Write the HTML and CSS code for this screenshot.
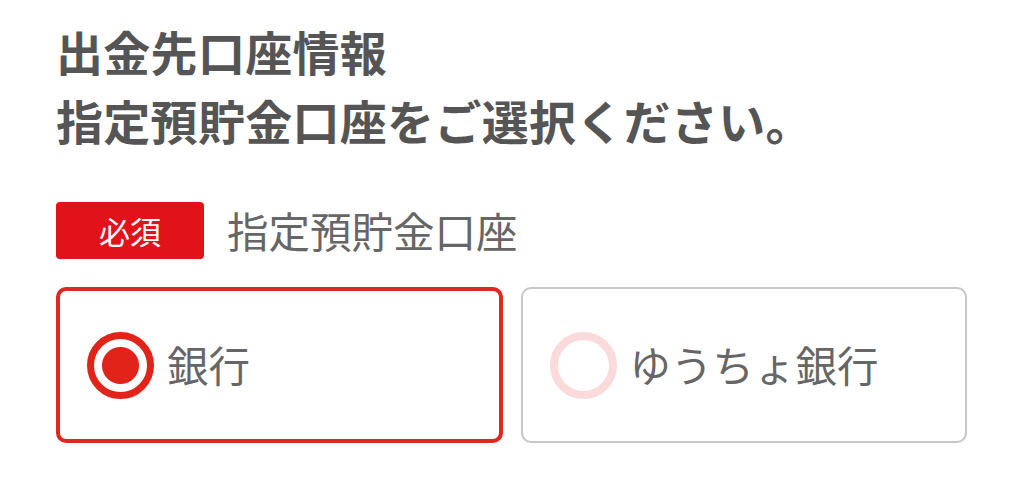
FILE: index.html
```html
<!DOCTYPE html>
<html lang="ja">
<head>
<meta charset="utf-8">
<link rel="stylesheet" href="styles.css">
</head>
<body>
<main class="page">
  <h1 class="title">出金先口座情報<br>指定預貯金口座をご選択ください。</h1>
  <div class="field-head">
    <span class="badge">必須</span>
    <span class="label">指定預貯金口座</span>
  </div>
  <div class="options">
    <label class="option selected">
      <span class="radio on"></span>
      <span class="option-text">銀行</span>
    </label>
    <label class="option">
      <span class="radio"></span>
      <span class="option-text">ゆうちょ銀行</span>
    </label>
  </div>
</main>
</body>
</html>
```
FILE: styles.css
```css
html, body {
  margin: 0;
  padding: 0;
  background: #ffffff;
}
body {
  font-family: "Noto Sans CJK JP", "Noto Sans", sans-serif;
  color: #555555;
}
.page {
  width: 911px;
  padding: 16px 0 0 56px;
}
.title {
  margin: 0;
  font-size: 47px;
  font-weight: 700;
  line-height: 69px;
  color: #555555;
  letter-spacing: 0.3px;
}
.field-head {
  display: flex;
  align-items: center;
  gap: 23px;
  margin-top: 48px;
}
.badge {
  display: flex;
  align-items: center;
  justify-content: center;
  width: 148px;
  height: 57px;
  border-radius: 4px;
  background: #e2121b;
  color: #ffffff;
  font-size: 31px;
  line-height: 1;
}
.label {
  font-size: 41.5px;
  line-height: 57px;
  color: #666666;
}
.options {
  display: grid;
  grid-template-columns: 1fr 1fr;
  gap: 18px;
  margin-top: 28px;
}
.option {
  box-sizing: border-box;
  height: 156px;
  display: flex;
  align-items: center;
  gap: 13px;
  padding-left: 27px;
  border: 2px solid #c6c7cc;
  border-radius: 10px;
}
.option.selected {
  border: 4px solid #e0281e;
  padding-left: 27px;
}
.radio {
  box-sizing: border-box;
  width: 67px;
  height: 67px;
  border-radius: 50%;
  border: 8px solid #fadadb;
  flex: none;
}
.radio.on {
  border: 7px solid #e2231a;
  background: radial-gradient(circle, #e2231a 0 18px, #ffffff 19px);
}
.option-text {
  font-size: 41.5px;
  line-height: 1;
  color: #666666;
}
```
